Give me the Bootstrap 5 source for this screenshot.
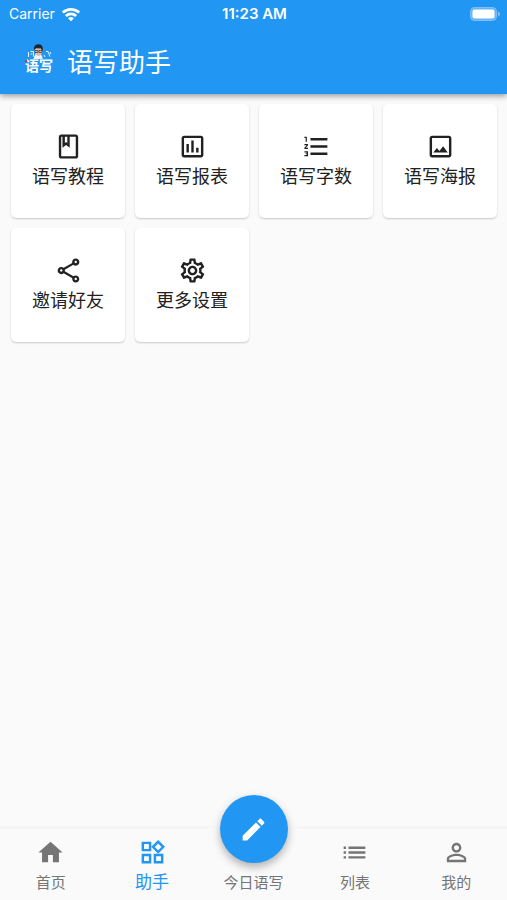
<!DOCTYPE html>
<html lang="zh-CN">
<head>
<meta charset="utf-8">
<meta name="viewport" content="width=device-width, initial-scale=1">
<title>语写助手</title>
<link href="https://cdn.jsdelivr.net/npm/bootstrap@5.3.0/dist/css/bootstrap.min.css" rel="stylesheet">
<style>
  :root { --brand: #2196f3; }
  body { background: #fafafa; color: #212121; font-family: "Noto Sans CJK SC", sans-serif; }
  .app-bar { background: var(--brand); box-shadow: 0 2px 6px rgba(0,0,0,.4); z-index: 2; }
  .status-bar { height: 28px; padding: 0 7px 0 9px; font: 14px/28px Inter, sans-serif; }
  .status-bar .clock { font-weight: 600; font-size: 15px; }
  .carrier { gap: 6px; }
  .title-bar { height: 66px; padding: 0 24px; gap: 13px; }
  .title-bar h1 { font-size: 26px; line-height: 36px; font-weight: 400; }
  .logo-text { font-size: 14px; font-weight: 700; fill: #fff; }
  .tile-grid { padding: 10px 10px 10px 11px; gap: 10px; display: grid; grid-template-columns: repeat(4, 1fr); }
  .tile { aspect-ratio: 1; background: #fff; color: #212121; border-radius: 5px; box-shadow: 0 1px 2px rgba(0,0,0,.2); font-size: 18px; line-height: 28px; padding-bottom: 1px; }
  .glyph { width: 29px; height: 29px; fill: currentColor; }
  .bottom-bar { border-top: 3px solid; border-image: linear-gradient(90deg, #f4f4f4 40%, #fafafa 43%, #fafafa 57%, #f4f4f4 60%) 1; background: #fafafa; height: 74px; }
  .tab-item { flex: 1 1 0; color: #757575; font-size: 15px; line-height: 24px; padding-top: 9px; gap: 3px; }
  .tab-item.active { color: var(--brand); font-size: 17px; gap: 2px; }
  .compose { width: 68px; height: 68px; background: var(--brand); box-shadow: 0 4px 8px rgba(0,0,0,.3); margin-top: -34px; }
  .tab-item.tab-mid { padding-top: 0; gap: 7px; }
</style>
<script src="https://cdn.jsdelivr.net/npm/bootstrap@5.3.0/dist/js/bootstrap.bundle.min.js"></script>
</head>
<body class="d-flex flex-column min-vh-100">
<header class="app-bar text-white position-relative">
  <div class="status-bar row g-0 align-items-center">
    <div class="carrier col d-flex align-items-center">Carrier
      <svg width="20" height="15" viewBox="0 0 20 15" fill="none" stroke="#fff" stroke-width="2.8" aria-hidden="true"><path d="M1.8 5.600a11.800 11.800 0 0 1 16.400 0M4.900 9a7.400 7.400 0 0 1 10.200 0"/><path d="M10 14.300 7 11.300a4.400 4.400 0 0 1 6 0z" fill="#fff" stroke="none"/></svg>
    </div>
    <div class="col-auto clock">11:23 AM</div>
    <div class="col d-flex justify-content-end">
      <svg width="30" height="14" viewBox="0 0 30 14" aria-hidden="true"><rect x=".5" y=".5" width="26" height="13" rx="4" fill="#64b5f6" stroke="#7fc0f8"/><path d="M28 4.500q2 .8 2 2.500t-2 2.500z" fill="#7fc0f8"/><rect x="2.500" y="2.500" width="22" height="9" rx="2" fill="#fff"/></svg>
    </div>
  </div>
  <div class="title-bar d-flex align-items-center">
    <svg width="30" height="36" viewBox="0 0 30 36" aria-hidden="true">
      <path d="M10 14l1.500-3h5l2 3v2h-9z" fill="#eef3f7"/><ellipse cx="14.500" cy="8" rx="3.700" ry="5" fill="#e8b79c"/>
      <path d="M10 7Q9.500 1.500 14 1.300q5-.3 4.900 5.200l-.9 2-.9-3-5-.3z" fill="#1b2733"/><path d="M11 7.500h3v2h-3zm4 0h3v2h-3z" fill="none" stroke="#34495e" stroke-width=".8"/>
      <path d="M4.500 9v5M6.500 8.500h3v5M6.500 11h2M20 12l1 2M22 8.500h2l2 5M26 9l1 2" fill="none" stroke="#e3f2fd"/>
      <text class="logo-text" x="1" y="28">语写</text>
      <circle cx="2" cy="18" r="1.200" fill="#b23a55"/>
    </svg>
    <h1 class="m-0">语写助手</h1>
  </div>
</header>

<main class="flex-grow-1">
  <div class="tile-grid">
    <a href="#guide" class="tile d-flex flex-column align-items-center justify-content-center text-decoration-none">
      <svg class="glyph" viewBox="0 0 24 24" aria-hidden="true"><path d="M18 2H6c-1.100 0-2 .9-2 2v16c0 1.100.9 2 2 2h12c1.100 0 2-.9 2-2V4c0-1.100-.9-2-2-2zM9 4h2v5l-1-.75L9 9V4zm9 16H6V4h1v9l3-2.250L13 13V4h5v16z"/></svg>
      <span>语写教程</span></a>
    <a href="#report" class="tile d-flex flex-column align-items-center justify-content-center text-decoration-none">
      <svg class="glyph" viewBox="0 0 24 24" aria-hidden="true"><path d="M19 3H5c-1.100 0-2 .9-2 2v14c0 1.100.9 2 2 2h14c1.100 0 2-.9 2-2V5c0-1.100-.9-2-2-2zm0 16H5V5h14v14zM7 10h2v7H7zM11 7h2v10h-2zM15 13h2v4h-2z"/></svg>
      <span>语写报表</span></a>
    <a href="#count" class="tile d-flex flex-column align-items-center justify-content-center text-decoration-none">
      <svg class="glyph" viewBox="0 0 24 24" aria-hidden="true"><path d="M2 17h2v.5H3v1h1v.5H2v1h3v-4H2v1zm1-9h1V4H2v1h1v3zm-1 3h1.800L2 13.100v.9h3v-1H3.200L5 10.900V10H2v1zm5-6v2h14V5H7zm0 14h14v-2H7v2zm0-6h14v-2H7v2z"/></svg>
      <span>语写字数</span></a>
    <a href="#poster" class="tile d-flex flex-column align-items-center justify-content-center text-decoration-none">
      <svg class="glyph" viewBox="0 0 24 24" aria-hidden="true"><path d="M19 5v14H5V5h14m0-2H5c-1.100 0-2 .9-2 2v14c0 1.100.9 2 2 2h14c1.100 0 2-.9 2-2V5c0-1.100-.9-2-2-2zm-4.860 8.860l-3 3.870L9 13.140 6 17h12l-3.860-5.140z"/></svg>
      <span>语写海报</span></a>
    <a href="#invite" class="tile d-flex flex-column align-items-center justify-content-center text-decoration-none">
      <svg class="glyph" viewBox="0 0 24 24" aria-hidden="true"><path d="M18 16.080c-.76 0-1.440.3-1.960.77L8.910 12.700c.05-.23.09-.46.09-.7s-.04-.47-.09-.7l7.050-4.110c.54.5 1.250.81 2.040.81 1.660 0 3-1.340 3-3s-1.340-3-3-3-3 1.340-3 3c0 .24.04.47.09.7L8.040 9.810C7.500 9.310 6.790 9 6 9c-1.660 0-3 1.340-3 3s1.340 3 3 3c.79 0 1.500-.31 2.040-.81l7.120 4.160c-.05.21-.08.43-.08.65 0 1.610 1.310 2.920 2.920 2.920s2.920-1.310 2.920-2.920-1.310-2.920-2.920-2.920zM18 4c.55 0 1 .45 1 1s-.45 1-1 1-1-.45-1-1 .45-1 1-1zM6 13c-.55 0-1-.45-1-1s.45-1 1-1 1 .45 1 1-.45 1-1 1zm12 7.020c-.55 0-1-.45-1-1s.45-1 1-1 1 .45 1 1-.45 1-1 1z"/></svg>
      <span>邀请好友</span></a>
    <a href="#settings" class="tile d-flex flex-column align-items-center justify-content-center text-decoration-none">
      <svg class="glyph" viewBox="0 0 24 24" aria-hidden="true"><path d="M19.430 12.980c.04-.32.07-.64.07-.98 0-.34-.03-.66-.07-.98l2.110-1.650c.19-.15.24-.42.12-.64l-2-3.460c-.09-.16-.26-.25-.44-.25-.06 0-.12.01-.17.03l-2.490 1c-.52-.4-1.080-.73-1.690-.98l-.38-2.650C14.460 2.180 14.250 2 14 2h-4c-.25 0-.46.18-.49.42l-.38 2.650c-.61.25-1.170.59-1.690.98l-2.490-1c-.06-.02-.12-.03-.18-.03-.17 0-.34.09-.43.25l-2 3.460c-.13.22-.07.49.12.64l2.110 1.650c-.04.32-.07.65-.07.98 0 .33.03.66.07.98l-2.110 1.650c-.19.15-.24.42-.12.64l2 3.460c.09.16.26.25.44.25.06 0 .12-.01.17-.03l2.490-1c.52.4 1.080.73 1.690.98l.38 2.650c.03.24.24.42.49.42h4c.25 0 .46-.18.49-.42l.38-2.650c.61-.25 1.170-.59 1.690-.98l2.490 1c.06.02.12.03.18.03.17 0 .34-.09.43-.25l2-3.460c.12-.22.07-.49-.12-.64l-2.110-1.650zm-1.980-1.710c.04.31.05.52.05.73 0 .21-.02.43-.05.73l-.14 1.130.89.7 1.080.84-.7 1.210-1.270-.51-1.040-.42-.9.68c-.43.32-.84.56-1.250.73l-1.060.43-.16 1.130-.2 1.350h-1.400l-.19-1.350-.16-1.130-1.060-.43c-.43-.18-.83-.41-1.230-.71l-.91-.7-1.060.43-1.270.51-.7-1.210 1.080-.84.89-.7-.14-1.130c-.03-.31-.05-.54-.05-.74s.02-.43.05-.73l.14-1.130-.89-.7-1.080-.84.7-1.210 1.270.51 1.040.42.9-.68c.43-.32.84-.56 1.250-.73l1.060-.43.16-1.130.2-1.350h1.390l.19 1.350.16 1.130 1.060.43c.43.18.83.41 1.230.71l.91.7 1.060-.43 1.270-.51.7 1.210-1.070.85-.89.7.14 1.130zM12 8c-2.210 0-4 1.790-4 4s1.790 4 4 4 4-1.790 4-4-1.790-4-4-4zm0 6c-1.100 0-2-.9-2-2s.9-2 2-2 2 .9 2 2-.9 2-2 2z"/></svg>
      <span>更多设置</span></a>
  </div>
</main>

<nav class="bottom-bar d-flex sticky-bottom" aria-label="主导航">
  <a href="#home" class="tab-item d-flex flex-column align-items-center text-decoration-none">
    <svg class="glyph" viewBox="0 0 24 24" aria-hidden="true"><path d="M10 20v-6h4v6h5v-8h3L12 3 2 12h3v8z"/></svg>首页</a>
  <a href="#helper" class="tab-item active d-flex flex-column align-items-center text-decoration-none" aria-current="page">
    <svg class="glyph" viewBox="0 0 24 24" aria-hidden="true"><path d="M16.660 4.520l2.830 2.830-2.830 2.830-2.830-2.830 2.830-2.830M9 5v4H5V5h4m10 10v4h-4v-4h4M9 15v4H5v-4h4m7.660-13.310L11 7.340 16.660 13l5.660-5.660-5.660-5.650zM11 3H3v8h8V3zm10 10h-8v8h8v-8zm-10 0H3v8h8v-8z"/></svg>助手</a>
  <div class="tab-item tab-mid d-flex flex-column align-items-center">
    <button type="button" class="compose btn rounded-circle border-0 p-0 text-white flex-shrink-0 d-flex align-items-center justify-content-center" aria-labelledby="today">
      <svg class="glyph" viewBox="0 0 24 24" aria-hidden="true"><path d="M3 17.250V21h3.750L17.810 9.940l-3.750-3.750L3 17.250zM20.710 7.040c.39-.39.39-1.020 0-1.410l-2.340-2.340c-.39-.39-1.020-.39-1.410 0l-1.830 1.830 3.750 3.750 1.830-1.830z"/></svg>
    </button><span id="today">今日语写</span></div>
  <a href="#list" class="tab-item d-flex flex-column align-items-center text-decoration-none">
    <svg class="glyph" viewBox="0 0 24 24" aria-hidden="true"><path d="M3 13h2v-2H3v2zm0 4h2v-2H3v2zm0-8h2V7H3v2zm4 4h14v-2H7v2zm0 4h14v-2H7v2zM7 7v2h14V7H7z"/></svg>列表</a>
  <a href="#me" class="tab-item d-flex flex-column align-items-center text-decoration-none">
    <svg class="glyph" viewBox="0 0 24 24" aria-hidden="true"><path d="M12 5.900c1.160 0 2.100.94 2.100 2.100s-.94 2.100-2.100 2.100S9.900 9.160 9.900 8s.94-2.100 2.100-2.100m0 9c2.970 0 6.100 1.460 6.100 2.100v1.100H5.900V17c0-.64 3.130-2.100 6.100-2.100M12 4C9.790 4 8 5.790 8 8s1.790 4 4 4 4-1.790 4-4-1.790-4-4-4zm0 9c-2.670 0-8 1.340-8 4v3h16v-3c0-2.660-5.330-4-8-4z"/></svg>我的</a>
</nav>
</body>
</html>
